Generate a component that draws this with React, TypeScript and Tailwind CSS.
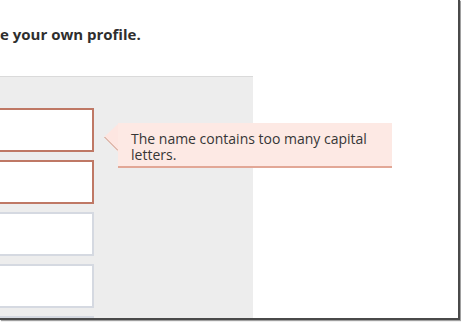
import React from "react";

const fields = [
  { error: true },
  { error: true },
  { error: false },
  { error: false },
  { error: false },
];

function Tooltip({ text }: { text: string }) {
  return (
    <div className="absolute left-[104px] top-[123px] flex">
      <svg width="14" height="45" viewBox="0 0 14 45" className="block">
        <polygon points="0,14 14,1 14,29" fill="#fde6e1" />
        <line x1="0.5" y1="14" x2="14" y2="27.5" stroke="#c4907f" strokeWidth="1" />
      </svg>
      <div className="w-[274px] h-[45px] bg-[#fde9e4] border-b-2 border-[#e2a796] pl-[13px] pt-[8px] text-[14px] leading-[16px] text-[#363636] font-['Open_Sans',sans-serif]">
        {text}
      </div>
    </div>
  );
}

export default function App() {
  return (
    <div className="w-[461px] h-[322px] bg-white">
      <div className="relative w-[460px] h-[320px] bg-white border-r-2 border-b-2 border-[#4a4a4a] shadow-[1px_1px_1px_#a0a0a0] overflow-hidden flex flex-col">
        <div className="h-[76px] pt-[25px] shrink-0">
          <h1 className="text-[15px] leading-[18px] font-bold text-[#2e2e2e] font-['Open_Sans',sans-serif] whitespace-nowrap">
            e your own profile.
          </h1>
        </div>
        <div className="w-[253px] flex-1 bg-[#ededed] border-t border-[#dadada] pt-[31px]">
          <div className="flex flex-col gap-2">
            {fields.map((f, i) => (
              <div
                key={i}
                className={
                  f.error
                    ? "-ml-[8px] w-[102px] h-[44px] shrink-0 bg-white border-2 border-[#bf7865]"
                    : "-ml-[8px] w-[102px] h-[44px] shrink-0 bg-white border-2 border-[#d5d9e1]"
                }
              />
            ))}
          </div>
        </div>
        <Tooltip text="The name contains too many capital letters." />
      </div>
    </div>
  );
}
